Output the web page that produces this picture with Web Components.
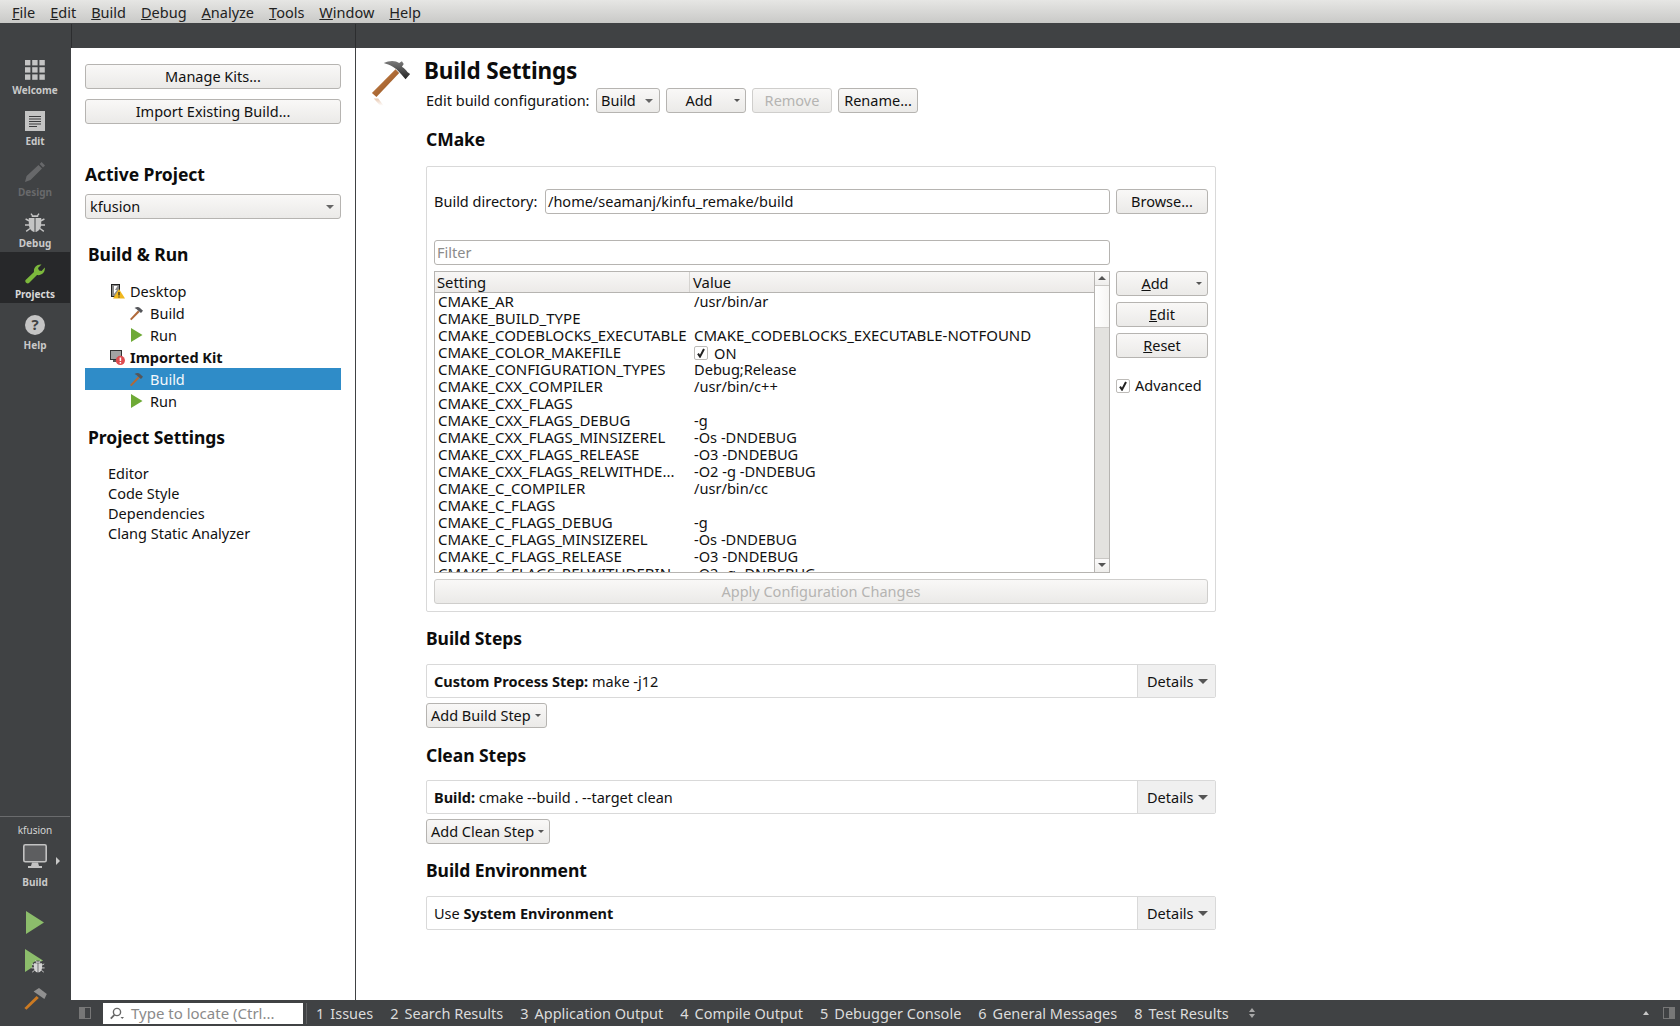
<!DOCTYPE html>
<html>
<head>
<meta charset="utf-8">
<title>Build Settings</title>
<style>
  html, body { margin: 0; height: 100%; overflow: hidden; background: #fff; }
  body { font: 14.5px/17px "Noto Sans", "Open Sans", sans-serif; color: #111; }
</style>
</head>
<body>
<qt-app></qt-app>

<script>
const UI_FONT = '"Noto Sans", "Open Sans", sans-serif';

const hammerBig = `<svg width="40" height="46" viewBox="0 0 44 50">
  <defs>
    <linearGradient id="h" x1="0" y1="0" x2="1" y2="1"><stop offset="0" stop-color="#d08a4e"/><stop offset="1" stop-color="#8a4a1c"/></linearGradient>
    <linearGradient id="g" x1="0" y1="0" x2="0" y2="1"><stop offset="0" stop-color="#7c7c7c"/><stop offset="1" stop-color="#222"/></linearGradient>
    <linearGradient id="r" x1="0" y1="0" x2="0" y2="1"><stop offset="0" stop-color="#e8c8b0"/><stop offset="1" stop-color="#fff"/></linearGradient>
  </defs>
  <path d="M1 36 L27 10 L31 14 L6 40.5 Z" fill="url(#h)"/>
  <path d="M14 3 C20 0 27 0 31 3 L34 1 L36 4 L34 7 C37 9 39 11 40 13 L43 15 L38 21 L33 15 L28 10 L24 7 C21 5 17 4 14 3 Z" fill="url(#g)"/>
  <path d="M3 42 L8 42 L14 50 L10 50 Z" fill="url(#r)"/>
</svg>`;

const hammerSmall = `<svg width="15" height="15" viewBox="0 0 15 15">
  <path d="M1 13 L9 4.5 L10.6 6 L2.4 14.2 Z" fill="#b0693a"/>
  <path d="M5.5 2 C8 0.5 10 1 11 2 L14 4.8 L12 7 L9 4.5 C8 3.4 7 2.6 5.5 2 Z" fill="#55565a"/>
</svg>`;

const bug = (fill) => `<path d="M6.5 4 C6.5 1.6 13.5 1.6 13.5 4 Z M3.8 5 L9.5 5 L9.5 19 C6 18.4 3.8 15 3.8 11 Z M10.5 5 L16.2 5 L16.2 11 C16.2 15 14 18.4 10.5 19 Z" fill="${fill}"/>
  <path d="M6 0.6 L8 3.4 M14 0.6 L12 3.4 M0.6 6 L4.6 8 M19.4 6 L15.4 8 M0 12 L4.6 12 M20 12 L15.4 12 M1.2 18.4 L5 15.5 M18.8 18.4 L15 15.5" stroke="${fill}" stroke-width="1.4" fill="none"/>`;

const ICONS = {
  welcome: `<svg width="20" height="20" viewBox="0 0 20 20" fill="#c4c4c4">
    <rect x="0" y="0" width="5.4" height="5.4"/><rect x="7.2" y="0" width="5.4" height="5.4"/><rect x="14.4" y="0" width="5.4" height="5.4"/>
    <rect x="0" y="7.2" width="5.4" height="5.4"/><rect x="7.2" y="7.2" width="5.4" height="5.4"/><rect x="14.4" y="7.2" width="5.4" height="5.4"/>
    <rect x="0" y="14.4" width="5.4" height="5.4"/><rect x="7.2" y="14.4" width="5.4" height="5.4"/><rect x="14.4" y="14.4" width="5.4" height="5.4"/></svg>`,
  edit: `<svg width="20" height="20" viewBox="0 0 20 20"><rect width="20" height="20" fill="#c4c4c4"/>
    <path d="M4 5.5H16 M4 8H16 M4 10.5H16 M4 13H16 M4 15.5H12" stroke="#3a3b3d" stroke-width="1"/></svg>`,
  design: `<svg width="20" height="20" viewBox="0 0 20 20"><path d="M0 20 L1.6 14 L13.5 3 L17 6.5 L5.5 18 Z M14.6 2 L16.6 0 L20 3.4 L18 5.5 Z" fill="#67686a"/></svg>`,
  debug: `<svg width="20" height="20" viewBox="0 0 20 20">${bug('#c4c4c4')}</svg>`,
  projects: `<svg width="20" height="20" viewBox="0 0 20 20"><path d="M0.6 16 L9 8 C8.4 4 11.5 0 16.5 0.6 L13 4 L14 6.4 L16.6 7 L19.8 3.6 C20.4 8.4 16.4 12 12 11 L4 19 C2.5 20.5 -0.8 17.8 0.6 16 Z" fill="#7cb83c"/></svg>`,
  help: `<svg width="20" height="20" viewBox="0 0 20 20"><circle cx="10" cy="10" r="10" fill="#c4c4c4"/><text x="10" y="15.4" font-size="15" font-weight="700" font-family="Noto Sans" text-anchor="middle" fill="#404244">?</text></svg>`,
  monitor: `<svg width="24" height="24" viewBox="0 0 24 24"><rect x="0.8" y="0.8" width="22.4" height="17" rx="1.5" fill="#5d5e60" stroke="#c2c2c2" stroke-width="1.6"/><path d="M9 18.5 H15 L16 22 H19 V24 H5 V22 H8 Z" fill="#c2c2c2"/></svg>`,
  run: `<svg width="18" height="23" viewBox="0 0 18 23"><path d="M0 0 L18 11.5 L0 23 Z" fill="#8cbd6b"/></svg>`,
  rundebug: `<svg width="20" height="24" viewBox="0 0 20 24"><path d="M0 0 L18 11.5 L0 23 Z" fill="#8cbd6b"/><ellipse cx="13" cy="17.6" rx="6" ry="6.2" fill="#404244"/><g transform="translate(6.4 11) scale(0.66)">${bug('#d4d4d4')}</g></svg>`,
  hammer: `<svg width="23" height="22" viewBox="0 0 23 22"><path d="M0.4 20 L12.6 8 L14.8 10 L2.4 21.8 Z" fill="#cc7a22"/><path d="M9.6 3.4 L15 0 L22.8 6 L20.4 11 Z" fill="#909090"/></svg>`,
  kitwarn: `<svg width="14" height="15" viewBox="0 0 14 15"><rect x="0.5" y="0.5" width="8" height="12" fill="#8a8a8a" stroke="#222"/><path d="M3 2 L6.5 2 L4 6 L6 6 L3 10" fill="#fff"/><path d="M8 5 L14 14.5 L2 14.5 Z" fill="#f0b71e"/><path d="M8 8 V11.5 M8 12.4 V13.6" stroke="#222" stroke-width="1.2"/></svg>`,
  kiterror: `<svg width="15" height="15" viewBox="0 0 15 15"><rect x="0.5" y="0.5" width="11" height="9" fill="#a2a2a2" stroke="#333"/><path d="M3 10 H8 V12 H3 Z" fill="#555"/><circle cx="10.4" cy="10.4" r="4.6" fill="#dd4b4f"/><path d="M10.4 7.6 V11 M10.4 12 V13.4" stroke="#fff" stroke-width="1.5"/></svg>`,
  treehammer: hammerSmall,
  treerun: `<svg width="12" height="14" viewBox="0 0 12 14"><path d="M0 0 L11.5 7 L0 14 Z" fill="#6eaa36"/></svg>`,
  hammerbig: hammerBig,
};

// small base class, every element just sets its markup once
class QtBase extends HTMLElement {
  constructor() {
    super();
    this.attachShadow({ mode: 'open' });
  }
  connectedCallback() {
    this.shadowRoot.innerHTML = this.markup();
  }
}

class QtIcon extends QtBase {
  markup() {
    return `<style>:host { display: inline-flex; line-height: 0; flex: none; }</style>${ICONS[this.getAttribute('name')] || ''}`;
  }
}

class QtButton extends QtBase {
  markup() {
    const arrow = this.hasAttribute('arrow') || this.hasAttribute('combo');
    return `<style>
      :host { display: block; height: 25px; flex: none; }
      .b { box-sizing: border-box; height: 100%; display: flex; align-items: center; justify-content: center;
        border: 1px solid #b6b4b1; border-radius: 3px; background: linear-gradient(#f9f8f7, #ebeae8); position: relative; white-space: nowrap; }
      :host([disabled]) .b { color: #b5b4b2; border-color: #cfcecc; }
      :host([left]) .b { justify-content: flex-start; padding-left: 4px; }
      :host([pad]) .b { padding-right: 14px; }
      i { position: absolute; right: 5px; top: 10px; width: 0; height: 0; border: 3px solid transparent; border-top: 3.5px solid #555; border-bottom: 0; }
      :host([combo]) i { right: 6px; border-width: 4.5px 4px 0; border-top-color: #666; }
    </style><div class="b"><slot></slot>${arrow ? '<i></i>' : ''}</div>`;
  }
}

class QtInput extends QtBase {
  markup() {
    return `<style>
      :host { display: block; height: 25px; flex: 1; min-width: 0; }
      .i { box-sizing: border-box; height: 100%; display: flex; align-items: center; padding-left: 2px; background: #fff;
        border: 1px solid #b6b4b1; border-radius: 3px; white-space: nowrap; overflow: hidden; }
      :host([placeholder]) .i { color: #8b8b8b; }
    </style><div class="i"><slot></slot></div>`;
  }
}

class QtCheck extends QtBase {
  markup() {
    return `<style>
      :host { display: inline-flex; align-items: center; gap: var(--check-gap, 5px); }
      span { box-sizing: border-box; width: 14px; height: 14px; border: 1px solid #bdbbb8; border-radius: 2px; background: #fff; display: inline-flex; align-items: center; justify-content: center; }
    </style><span><svg width="8" height="10" viewBox="0 0 8 10"><path d="M1 5.6 L3 8.6 L7 1" fill="none" stroke="#222" stroke-width="2"/></svg></span><slot></slot>`;
  }
}

class QtHeading extends QtBase {
  markup() {
    return `<style>
      :host { display: block; font: 700 17.5px/20px ${UI_FONT}; color: #0c0c0c; letter-spacing: -0.05px; white-space: nowrap; }
    </style><slot></slot>`;
  }
}

class QtMenubar extends QtBase {
  markup() {
    return `<style>
      :host { display: flex; height: 24px; box-sizing: border-box; padding: 1px 0 0 12px; gap: 15px; align-items: center;
        background: linear-gradient(#e6e6e4, #c9c9c7); border-bottom: 1px solid #404244; color: #222; font-size: 14.5px; }
    </style><slot></slot>`;
  }
}

class QtToolstrip extends QtBase {
  markup() {
    return `<style>
      :host { display: flex; height: 24px; background: #404244; }
      div { box-sizing: border-box; border-right: 1px solid #2c2d2f; height: 100%; }
      .a { width: 72px; } .b { width: 284px; }
    </style><div class="a"></div><div class="b"></div>`;
  }
}

class QtMode extends QtBase {
  markup() {
    return `<style>
      :host { display: flex; flex-direction: column; align-items: center; height: 51px; box-sizing: border-box; padding-top: 12px; width: 70px;
        font: 700 10px/14px ${UI_FONT}; color: #c9c9c9; }
      :host([active]) { background: #27282a; color: #d8d8d8; }
      :host([disabled]) { color: #68696b; }
      .t { margin-top: 3px; }
    </style><qt-icon name="${this.getAttribute('icon')}"></qt-icon><div class="t"><slot></slot></div>`;
  }
}

class QtModebar extends QtBase {
  markup() {
    return `<style>
      :host { display: flex; flex-direction: column; width: 71px; flex: none; background: #404244; color: #c9c9c9; font: 700 10px/14px ${UI_FONT}; }
      .kit { margin-top: auto; border-top: 1px solid #6a6b6d; width: 70px; text-align: center; padding-top: 5px; }
      .name { font-weight: 400; color: #d4d4d4; line-height: 16px; }
      .mon { position: relative; display: flex; justify-content: center; margin-top: 6px; height: 24px; }
      .mon i { position: absolute; left: 56px; top: 13px; border: 4px solid transparent; border-left: 4px solid #c8c8c8; border-right: 0; }
      .lbl { margin-top: 7px; }
      .act { display: flex; flex-direction: column; align-items: center; width: 70px; }
      .act qt-icon { display: flex; }
    </style>
    <div class="modes">
      <qt-mode icon="welcome">Welcome</qt-mode>
      <qt-mode icon="edit">Edit</qt-mode>
      <qt-mode icon="design" disabled>Design</qt-mode>
      <qt-mode icon="debug">Debug</qt-mode>
      <qt-mode icon="projects" active>Projects</qt-mode>
      <qt-mode icon="help">Help</qt-mode>
    </div>
    <div class="kit">
      <div class="name">kfusion</div>
      <div class="mon"><qt-icon name="monitor"></qt-icon><i></i></div>
      <div class="lbl">Build</div>
    </div>
    <div class="act" style="margin-top:22px;height:115px">
      <qt-icon name="run"></qt-icon>
      <qt-icon name="rundebug" style="margin-top:15px"></qt-icon>
      <qt-icon name="hammer" style="margin-top:15px"></qt-icon>
    </div>`;
  }
}

class QtTreeRow extends QtBase {
  markup() {
    const indent = this.getAttribute('indent') || 0;
    const gap = this.getAttribute('gap') || 6;
    const iconW = this.getAttribute('w') || 15;
    return `<style>
      :host { display: flex; align-items: center; height: 22px; white-space: nowrap; }
      :host([selected]) { background: #2f8cc8; color: #f4f8fb; }
      :host([bold]) { font-weight: 700; }
      .ic { width: ${iconW}px; display: flex; justify-content: center; margin-left: ${indent}px; margin-right: ${gap}px; }
    </style><div class="ic"><qt-icon name="${this.getAttribute('icon')}"></qt-icon></div><slot></slot>`;
  }
}

class QtTargets extends QtBase {
  markup() {
    return `<style>
      :host { display: block; width: 285px; flex: none; box-sizing: border-box; border-right: 1px solid #404244; padding: 16px 14px 0; background: #fff; }
      qt-button + qt-button { margin-top: 10px; }
      qt-heading { margin-top: 40px; }
      .combo { margin-top: 10px; }
      .br { margin: 25px 0 16px 3px; }
      .ps { margin: 15px 0 16px 3px; }
      .st div { height: 20px; line-height: 20px; padding-left: 23px; }
    </style>
    <qt-button>Manage Kits...</qt-button>
    <qt-button>Import Existing Build...</qt-button>
    <qt-heading>Active Project</qt-heading>
    <qt-button class="combo" left combo>kfusion</qt-button>
    <qt-heading class="br">Build &amp; Run</qt-heading>
    <div>
      <qt-tree-row icon="kitwarn" indent="26" gap="5" w="14">Desktop</qt-tree-row>
      <qt-tree-row icon="treehammer" indent="44">Build</qt-tree-row>
      <qt-tree-row icon="treerun" indent="44">Run</qt-tree-row>
      <qt-tree-row icon="kiterror" indent="25" gap="5" bold>Imported Kit</qt-tree-row>
      <qt-tree-row icon="treehammer" indent="44" selected>Build</qt-tree-row>
      <qt-tree-row icon="treerun" indent="44">Run</qt-tree-row>
    </div>
    <qt-heading class="ps">Project Settings</qt-heading>
    <div class="st"><div>Editor</div><div>Code Style</div><div>Dependencies</div><div>Clang Static Analyzer</div></div>`;
  }
}

const CMAKE_ROWS = [
  ['CMAKE_AR', '/usr/bin/ar'],
  ['CMAKE_BUILD_TYPE', ''],
  ['CMAKE_CODEBLOCKS_EXECUTABLE', 'CMAKE_CODEBLOCKS_EXECUTABLE-NOTFOUND'],
  ['CMAKE_COLOR_MAKEFILE', '#ON'],
  ['CMAKE_CONFIGURATION_TYPES', 'Debug;Release'],
  ['CMAKE_CXX_COMPILER', '/usr/bin/c++'],
  ['CMAKE_CXX_FLAGS', ''],
  ['CMAKE_CXX_FLAGS_DEBUG', '-g'],
  ['CMAKE_CXX_FLAGS_MINSIZEREL', '-Os -DNDEBUG'],
  ['CMAKE_CXX_FLAGS_RELEASE', '-O3 -DNDEBUG'],
  ['CMAKE_CXX_FLAGS_RELWITHDE...', '-O2 -g -DNDEBUG'],
  ['CMAKE_C_COMPILER', '/usr/bin/cc'],
  ['CMAKE_C_FLAGS', ''],
  ['CMAKE_C_FLAGS_DEBUG', '-g'],
  ['CMAKE_C_FLAGS_MINSIZEREL', '-Os -DNDEBUG'],
  ['CMAKE_C_FLAGS_RELEASE', '-O3 -DNDEBUG'],
  ['CMAKE_C_FLAGS_RELWITHDEBIN', '-O2 -g -DNDEBUG'],
];

class QtCmakeTable extends QtBase {
  markup() {
    const rows = CMAKE_ROWS.map(([k, v]) => {
      const val = v === '#ON' ? '<qt-check>ON</qt-check>' : v;
      const caps = v.startsWith('CMAKE') ? ' caps' : '';
      return `<div class="r"><div class="k">${k}</div><div class="v${caps}">${val}</div></div>`;
    }).join('');
    return `<style>
      :host { display: flex; flex: 1; height: 302px; min-width: 0; box-sizing: border-box; border: 1px solid #b6b4b1; --check-gap: 6px; }
      .main { flex: 1; min-width: 0; display: flex; flex-direction: column; }
      .head { display: flex; height: 21px; box-sizing: border-box; border-bottom: 1px solid #b6b4b1; background: linear-gradient(#f8f7f6, #eceae8); line-height: 20px; flex: none; font-size: 14.8px; }
      .head div:first-child { width: 255px; box-sizing: border-box; padding-left: 2px; border-right: 1px solid #d5d3d0; }
      .head div:last-child { padding-left: 3px; }
      .body { flex: 1; min-height: 0; clip-path: inset(-3px 0 0 0); }
      .r { display: flex; height: 17px; line-height: 17px; white-space: nowrap; }
      .k { width: 256px; flex: none; box-sizing: border-box; padding-left: 3px; font-size: 15px; }
      .v { padding-left: 3px; font-size: 14.6px; }
      .v.caps { font-size: 15px; }
      .sb { width: 14px; flex: none; border-left: 1px solid #b6b4b1; display: flex; flex-direction: column; background: #e3e2df; }
      .btn { height: 13px; flex: none; background: linear-gradient(#fbfafa, #efeeec); position: relative; }
      .btn.u { border-bottom: 1px solid #c9c7c4; }
      .btn.d { border-top: 1px solid #c9c7c4; margin-top: auto; }
      .btn i { position: absolute; left: 3px; top: 4px; border: 4px solid transparent; }
      .btn.u i { border-bottom: 4px solid #555; border-top: 0; }
      .btn.d i { border-top: 4px solid #555; border-bottom: 0; }
      .h { height: 41px; flex: none; background: linear-gradient(90deg, #fff, #f6f5f3); border-bottom: 1px solid #d0cecb; }
    </style>
    <div class="main">
      <div class="head"><div>Setting</div><div>Value</div></div>
      <div class="body">${rows}</div>
    </div>
    <div class="sb"><div class="btn u"><i></i></div><div class="h"></div><div class="btn d"><i></i></div></div>`;
  }
}

class QtStep extends QtBase {
  markup() {
    return `<style>
      :host { display: flex; height: 34px; box-sizing: border-box; border: 1px solid #d9d9d9; border-radius: 2px; }
      .t { flex: 1; padding-left: 7px; display: flex; align-items: center; white-space: pre; }
      .d { width: 78px; box-sizing: border-box; border-left: 1px solid #d9d9d9; background: #f0f0f0; display: flex; align-items: center; padding-left: 9px; gap: 4px; }
      i { border: 5px solid transparent; border-top: 5px solid #555; border-bottom: 0; margin-top: 1px; }
    </style><div class="t"><slot></slot></div><div class="d">Details<i></i></div>`;
  }
}

class QtGroup extends QtBase {
  markup() {
    return `<style>
      :host { display: block; box-sizing: border-box; height: 446px; border: 1px solid #d9d9d9; border-radius: 2px; padding: 22px 7px 0; }
    </style><slot></slot>`;
  }
}

class QtBuildSettings extends QtBase {
  markup() {
    return `<style>
      :host { display: flex; flex: 1; min-width: 0; padding-left: 15px; background: #fff; }
      .ic { width: 55px; flex: none; padding-top: 12px; }
      .main { width: 790px; flex: none; }
      .title { font: 700 22.5px/28px ${UI_FONT}; margin: 9px 0 0 -2px; letter-spacing: -0.15px; color: #0c0c0c; }
      .cfg { display: flex; align-items: center; gap: 6px; height: 25px; margin-top: 3px; }
      .cfg .l { width: 164px; white-space: nowrap; }
      .cmake { margin: 16px 0 17px; }
      .row { display: flex; gap: 6px; align-items: center; }
      .row .l { width: 105px; flex: none; white-space: nowrap; }
      .filter { margin-top: 26px; padding-right: 98px; height: 25px; display: flex; }
      .tbl { display: flex; gap: 6px; margin-top: 6px; }
      .side { width: 92px; flex: none; display: flex; flex-direction: column; gap: 6px; }
      .adv { margin-top: 13px; }
      .apply { margin-top: 6px; }
      .add { width: fit-content; margin-top: 5px; }
      .h2 { margin: 16px 0 16px; }
      .h3 { margin: 17px 0 15px; }
      .h4 { margin: 16px 0 16px; }
    </style>
    <div class="ic"><qt-icon name="hammerbig"></qt-icon></div>
    <div class="main">
      <div class="title">Build Settings</div>
      <div class="cfg">
        <div class="l">Edit build configuration:</div>
        <qt-button style="width:64px" left combo>Build</qt-button>
        <qt-button style="width:80px" pad arrow>Add</qt-button>
        <qt-button style="width:80px" disabled>Remove</qt-button>
        <qt-button style="width:80px">Rename...</qt-button>
      </div>
      <qt-heading class="cmake">CMake</qt-heading>
      <qt-group>
        <div class="row">
          <div class="l">Build directory:</div>
          <qt-input>/home/seamanj/kinfu_remake/build</qt-input>
          <qt-button style="width:92px">Browse...</qt-button>
        </div>
        <div class="filter"><qt-input placeholder>Filter</qt-input></div>
        <div class="tbl">
          <qt-cmake-table></qt-cmake-table>
          <div class="side">
            <qt-button pad arrow><span><u>A</u>dd</span></qt-button>
            <qt-button><span><u>E</u>dit</span></qt-button>
            <qt-button><span><u>R</u>eset</span></qt-button>
            <qt-check class="adv">Advanced</qt-check>
          </div>
        </div>
        <qt-button class="apply" disabled>Apply Configuration Changes</qt-button>
      </qt-group>
      <qt-heading class="h2">Build Steps</qt-heading>
      <qt-step><b>Custom Process Step:</b> make -j12</qt-step>
      <qt-button class="add" style="width:121px" left arrow>Add Build Step</qt-button>
      <qt-heading class="h3">Clean Steps</qt-heading>
      <qt-step><b>Build:</b> cmake --build . --target clean</qt-step>
      <qt-button class="add" style="width:124px" left arrow>Add Clean Step</qt-button>
      <qt-heading class="h4">Build Environment</qt-heading>
      <qt-step>Use <b>System Environment</b></qt-step>
    </div>`;
  }
}

class QtOutput extends QtBase {
  markup() {
    return `<style>
      :host { display: inline-flex; gap: 6px; white-space: nowrap; }
    </style><span>${this.getAttribute('num')}</span><slot></slot>`;
  }
}

class QtStatusbar extends QtBase {
  markup() {
    return `<style>
      :host { display: flex; align-items: center; height: 26px; background: #404244; color: #dcdcdc; font-size: 14.5px; position: relative; }
      .side { margin-left: 8px; width: 12px; height: 12px; box-sizing: border-box; border: 1px solid #777; background: linear-gradient(90deg, #777 50%, #404244 50%); flex: none; }
      .loc { margin-left: 12px; width: 200px; height: 21px; background: #fff; color: #8a8a8a; display: flex; align-items: center; gap: 7px; padding-left: 7px; box-sizing: border-box; flex: none; white-space: nowrap; font-size: 15px; }
      .sep { width: 1px; height: 21px; background: #606163; margin-left: 3px; flex: none; }
      .outs { display: flex; gap: 17px; margin-left: 9px; }
      .ud { margin-left: 20px; display: flex; flex-direction: column; gap: 2px; }
      .ud i { border: 3.5px solid transparent; display: block; }
      .ud i:first-child { border-bottom: 4px solid #a8a8a8; border-top: 0; }
      .ud i:last-child { border-top: 4px solid #a8a8a8; border-bottom: 0; }
      .r { margin-left: auto; display: flex; align-items: center; gap: 14px; margin-right: 5px; }
      .r i { border: 3.5px solid transparent; border-bottom: 4px solid #c8c8c8; border-top: 0; }
      .r span { width: 12px; height: 12px; box-sizing: border-box; border: 1px solid #777; background: linear-gradient(90deg, #404244 50%, #777 50%); }
    </style>
    <div class="side"></div>
    <div class="loc">
      <svg width="14" height="13" viewBox="0 0 14 13"><circle cx="7" cy="5" r="3.6" fill="none" stroke="#666" stroke-width="1.4"/><path d="M4.4 7.8 L0.8 11.6" stroke="#666" stroke-width="1.8"/><path d="M10.5 10 H14 L12.2 12 Z" fill="#666"/></svg>
      <span>Type to locate (Ctrl...</span>
    </div>
    <div class="sep"></div>
    <div class="outs">
      <qt-output num="1">Issues</qt-output>
      <qt-output num="2">Search Results</qt-output>
      <qt-output num="3">Application Output</qt-output>
      <qt-output num="4">Compile Output</qt-output>
      <qt-output num="5">Debugger Console</qt-output>
      <qt-output num="6">General Messages</qt-output>
      <qt-output num="8">Test Results</qt-output>
    </div>
    <div class="ud"><i></i><i></i></div>
    <div class="r"><i></i><span></span></div>`;
  }
}

class QtApp extends QtBase {
  markup() {
    return `<style>
      :host { display: flex; flex-direction: column; height: 1026px; width: 1680px; overflow: hidden; }
      .mid { display: flex; flex: 1; min-height: 0; }
      .right { display: flex; flex-direction: column; flex: 1; min-width: 0; }
      .panes { display: flex; flex: 1; min-height: 0; }
    </style>
    <qt-menubar>
      <span><u>F</u>ile</span><span><u>E</u>dit</span><span><u>B</u>uild</span><span><u>D</u>ebug</span><span><u>A</u>nalyze</span><span><u>T</u>ools</span><span><u>W</u>indow</span><span><u>H</u>elp</span>
    </qt-menubar>
    <qt-toolstrip></qt-toolstrip>
    <div class="mid">
      <qt-modebar></qt-modebar>
      <div class="right">
        <div class="panes">
          <qt-targets></qt-targets>
          <qt-build-settings></qt-build-settings>
        </div>
        <qt-statusbar></qt-statusbar>
      </div>
    </div>`;
  }
}

customElements.define('qt-icon', QtIcon);
customElements.define('qt-button', QtButton);
customElements.define('qt-input', QtInput);
customElements.define('qt-check', QtCheck);
customElements.define('qt-heading', QtHeading);
customElements.define('qt-menubar', QtMenubar);
customElements.define('qt-toolstrip', QtToolstrip);
customElements.define('qt-mode', QtMode);
customElements.define('qt-modebar', QtModebar);
customElements.define('qt-tree-row', QtTreeRow);
customElements.define('qt-targets', QtTargets);
customElements.define('qt-cmake-table', QtCmakeTable);
customElements.define('qt-step', QtStep);
customElements.define('qt-group', QtGroup);
customElements.define('qt-build-settings', QtBuildSettings);
customElements.define('qt-output', QtOutput);
customElements.define('qt-statusbar', QtStatusbar);
customElements.define('qt-app', QtApp);
</script>
</body>
</html>
